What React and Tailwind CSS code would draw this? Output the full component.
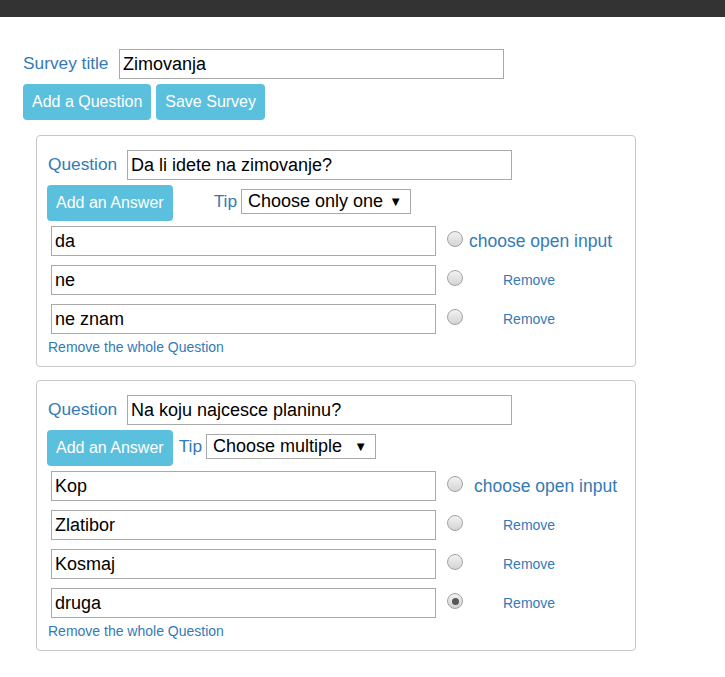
import React from "react";

const F = { fontFamily: '"Liberation Sans", Arial, sans-serif' };

function Radio({ checked }) {
  return (
    <span className="mt-[5px] ml-[11px] w-4 h-4 rounded-full border border-[#a3a3a3] bg-linear-to-b from-[#f2f2f2] to-[#d4d4d4] flex items-center justify-center shrink-0">
      {checked && <span className="w-[7px] h-[7px] rounded-full bg-[#585858]" />}
    </span>
  );
}

function TextBox({ value, w = "w-[385px]" }) {
  return (
    <div className={`${w} h-[30px] border border-[#a9a9a9] bg-white pl-[3px] flex items-center text-[18px] text-black shrink-0`}>
      {value}
    </div>
  );
}

function Select({ value }) {
  return (
    <div className="w-[170px] h-[25px] border border-[#a9a9a9] bg-white pl-[6px] pr-[8px] flex items-center justify-between text-[18px] text-black">
      <span>{value}</span>
      <span className="text-[13px] leading-none">▼</span>
    </div>
  );
}

function Btn({ children }) {
  return (
    <div className="h-9 px-[9px] rounded-[4px] bg-[#5bc0de] text-white text-[16px] flex items-center shrink-0">
      {children}
    </div>
  );
}

function Card({ question, tip, tipGap, openGap, answers, checkedIndex }) {
  return (
    <div className="ml-[13px] w-[600px] border border-[#c8c8c8] rounded-[4px] pt-[14px] pl-[10px] pb-[9px]">
      <div className="flex items-center">
        <span className="w-[80px] pl-[1px] text-[17.3px] text-[#337ab7]">Question</span>
        <TextBox value={question} />
      </div>
      <div className="flex items-center mt-[5px]">
        <Btn>Add an Answer</Btn>
        <span className={`${tipGap} text-[17.3px] text-[#337ab7] mr-[4px] -mt-[3px]`}>Tip</span>
        <div className="-mt-[3px]">
          <Select value={tip} />
        </div>
      </div>
      <div className="flex flex-col gap-[9px] mt-[5px] ml-[4px]">
        {answers.map((a, i) => (
          <div key={i} className="flex items-start">
            <TextBox value={a} />
            <Radio checked={checkedIndex === i} />
            {i === 0 ? (
              <span className={`${openGap} h-[30px] flex items-center text-[17.5px] text-[#337ab7]`}>
                choose open input
              </span>
            ) : (
              <span className="ml-[40px] h-[30px] flex items-center text-[14px] text-[#337ab7]">
                Remove
              </span>
            )}
          </div>
        ))}
      </div>
      <div className="mt-[3px] leading-[20px] text-[14px] text-[#337ab7] pl-[1px]">
        Remove the whole Question
      </div>
    </div>
  );
}

export default function App() {
  return (
    <div style={F} className="w-[725px] min-h-[677px] bg-white">
      <div className="h-[17px] bg-[#333333]" />
      <div className="pl-[23px] pt-[32px]">
        <div className="flex items-center">
          <span className="w-[96px] text-[17.3px] text-[#337ab7]">Survey title</span>
          <TextBox value="Zimovanja" />
        </div>
        <div className="flex gap-[5px] mt-[5px]">
          <Btn>Add a Question</Btn>
          <Btn>Save Survey</Btn>
        </div>
        <div className="mt-[15px] flex flex-col gap-[13px]">
          <Card
            question="Da li idete na zimovanje?"
            tip="Choose only one"
            tipGap="ml-[41px]"
            openGap="ml-[6px]"
            answers={["da", "ne", "ne znam"]}
            checkedIndex={-1}
          />
          <Card
            question="Na koju najcesce planinu?"
            tip="Choose multiple"
            tipGap="ml-[6px]"
            openGap="ml-[11px]"
            answers={["Kop", "Zlatibor", "Kosmaj", "druga"]}
            checkedIndex={3}
          />
        </div>
      </div>
    </div>
  );
}
